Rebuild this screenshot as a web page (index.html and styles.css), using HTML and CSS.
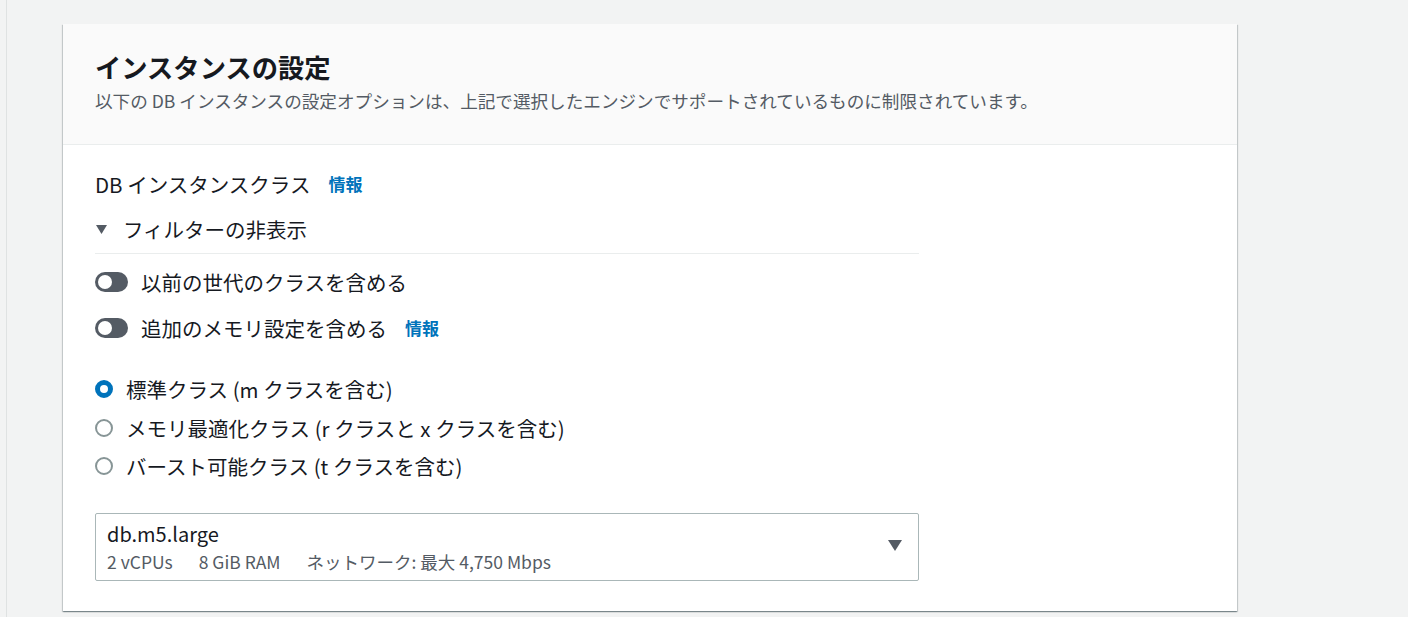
FILE: index.html
```html
<!DOCTYPE html>
<html lang="ja">
<head>
    <meta charset="UTF-8">
    <meta name="viewport" content="width=device-width, initial-scale=1.0">
    <title>インスタンスの設定</title>
    <link rel="stylesheet" href="styles.css">
</head>
<body>
    <div class="page">
        <!-- Container -->
        <div class="card">
            <div class="card-header">
                <h2>インスタンスの設定</h2>
                <p class="description">以下の DB インスタンスの設定オプションは、上記で選択したエンジンでサポートされているものに制限されています。</p>
            </div>

            <div class="card-body">
                <div class="field-label">DB インスタンスクラス<a href="#" class="info">情報</a></div>

                <div class="filter-toggle">
                    <svg class="caret" width="11" height="9" viewBox="0 0 11 9"><path d="M0 0 H11 L5.5 9 Z" fill="#545b64"/></svg>
                    <span>フィルターの非表示</span>
                </div>
                <div class="divider"></div>

                <label class="toggle-row first">
                    <span class="toggle"><span class="knob"></span></span>
                    <span>以前の世代のクラスを含める</span>
                </label>
                <label class="toggle-row second">
                    <span class="toggle"><span class="knob"></span></span>
                    <span>追加のメモリ設定を含める</span><a href="#" class="info">情報</a>
                </label>

                <div class="radio-group">
                    <label class="radio-row"><span class="radio checked"></span><span>標準クラス (m クラスを含む)</span></label>
                    <label class="radio-row"><span class="radio"></span><span>メモリ最適化クラス (r クラスと x クラスを含む)</span></label>
                    <label class="radio-row"><span class="radio"></span><span>バースト可能クラス (t クラスを含む)</span></label>
                </div>

                <div class="select">
                    <div class="select-text">
                        <div class="select-value">db.m5.large</div>
                        <div class="select-tags">
                            <span>2 vCPUs</span>
                            <span>8 GiB RAM</span>
                            <span>ネットワーク: 最大 4,750 Mbps</span>
                        </div>
                    </div>
                    <svg class="select-arrow" width="14" height="11" viewBox="0 0 14 11"><path d="M0 0 H14 L7 11 Z" fill="#545b64"/></svg>
                </div>
            </div>
        </div>
    </div>
</body>
</html>
```

FILE: styles.css
```css
body {
    margin: 0;
    background-color: #f2f3f3;
    font-family: "Noto Sans CJK JP", "Noto Sans", sans-serif;
    color: #16191f;
}

.page {
    margin-left: 6px;
    border-left: 1px solid #dfe2e2;
    min-height: 617px;
    padding: 24px 0 0 56px;
    box-sizing: border-box;
}

.card {
    width: 1174px;
    background: #ffffff;
    box-shadow: 0 1px 1px 0 rgba(0, 28, 36, 0.3), 1px 1px 1px 0 rgba(0, 28, 36, 0.15), -1px 1px 1px 0 rgba(0, 28, 36, 0.15);
}

.card-header {
    background: #fafafa;
    padding: 27px 32px 32px;
    border-bottom: 1px solid #eaeded;
}

.card-header h2 {
    margin: 0;
    font-size: 26.3px;
    line-height: 32px;
    font-weight: bold;
}

.description {
    margin: 7px 0 0;
    font-size: 17.6px;
    line-height: 22px;
    color: #545b64;
}

.card-body {
    padding: 26px 32px 30px;
    font-size: 20.5px;
    line-height: 26px;
}

.field-label {
    display: flex;
    align-items: center;
}

.info {
    margin-left: 18px;
    font-size: 17px;
    font-weight: bold;
    color: #0073bb;
    text-decoration: none;
}

.filter-toggle {
    margin-top: 19px;
    display: flex;
    align-items: center;
}

.caret {
    margin: 0 16px 0 1px;
}

.divider {
    margin-top: 11px;
    width: 824px;
    height: 1px;
    background: #eaeded;
}

.toggle-row {
    display: flex;
    align-items: center;
}

.toggle-row.first {
    margin-top: 15px;
}

.toggle-row.second {
    margin-top: 20px;
}

.toggle {
    position: relative;
    width: 33px;
    height: 20px;
    border-radius: 10px;
    background: #545b64;
    margin-right: 13px;
    flex-shrink: 0;
}

.knob {
    position: absolute;
    left: 3px;
    top: 3px;
    width: 14px;
    height: 14px;
    border-radius: 50%;
    background: #ffffff;
}

.radio-group {
    margin-top: 35px;
    display: flex;
    flex-direction: column;
    gap: 12.5px;
}

.radio-row {
    display: flex;
    align-items: center;
}

.radio {
    width: 18px;
    height: 18px;
    box-sizing: border-box;
    border: 2px solid #879596;
    border-radius: 50%;
    margin-right: 13px;
    background: #ffffff;
}

.radio.checked {
    border: 5px solid #0073bb;
}

.select {
    margin-top: 34px;
    width: 824px;
    height: 68px;
    box-sizing: border-box;
    border: 1px solid #aab7b8;
    border-radius: 2px;
    padding: 8px 16px 7px 11px;
    display: flex;
    align-items: center;
    justify-content: space-between;
}

.select-value {
    font-size: 20px;
    line-height: 24px;
}

.select-tags {
    margin-top: 5px;
    display: flex;
    gap: 26px;
    font-size: 17.5px;
    line-height: 22px;
    color: #545b64;
}

.select-arrow {
    margin-top: -4px;
}
```
